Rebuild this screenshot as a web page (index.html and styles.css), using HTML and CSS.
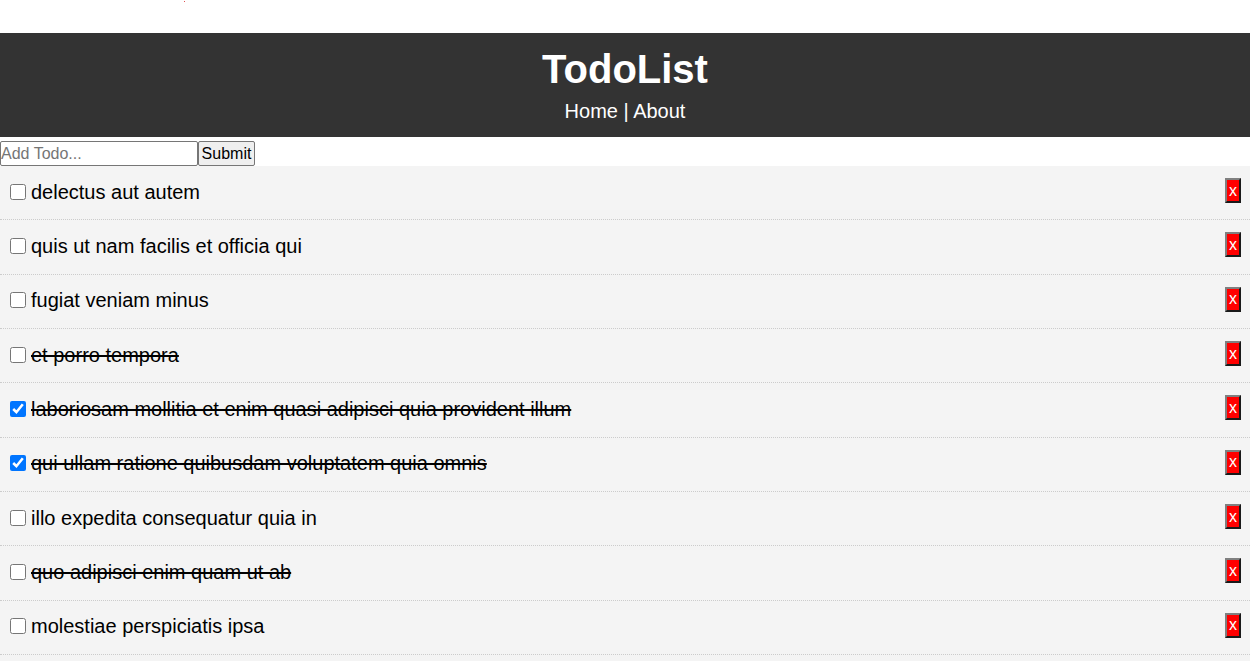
FILE: index.html
```html
<!DOCTYPE html>
<html>
<head>
<meta charset="utf-8">
<link rel="stylesheet" href="styles.css">
</head>
<body>
<div class="app">
  <div class="top-strip"><span class="dot"></span></div>
  <header class="header">
    <h1 class="title">TodoList</h1>
    <nav class="nav"><a href="#">Home</a> | <a href="#">About</a></nav>
  </header>
  <form class="add-form">
    <input class="add-input" type="text" placeholder="Add Todo...">
    <button class="add-btn" type="button">Submit</button>
  </form>
  <div class="todos">
    <div class="todo"><input class="check" type="checkbox"><span class="label">delectus aut autem</span><button class="del" type="button">x</button></div>
    <div class="todo"><input class="check" type="checkbox"><span class="label">quis ut nam facilis et officia qui</span><button class="del" type="button">x</button></div>
    <div class="todo"><input class="check" type="checkbox"><span class="label">fugiat veniam minus</span><button class="del" type="button">x</button></div>
    <div class="todo"><input class="check" type="checkbox"><span class="label done">et porro tempora</span><button class="del" type="button">x</button></div>
    <div class="todo"><input class="check" type="checkbox" checked><span class="label done">laboriosam mollitia et enim quasi adipisci quia provident illum</span><button class="del" type="button">x</button></div>
    <div class="todo"><input class="check" type="checkbox" checked><span class="label done">qui ullam ratione quibusdam voluptatem quia omnis</span><button class="del" type="button">x</button></div>
    <div class="todo"><input class="check" type="checkbox"><span class="label">illo expedita consequatur quia in</span><button class="del" type="button">x</button></div>
    <div class="todo"><input class="check" type="checkbox"><span class="label done">quo adipisci enim quam ut ab</span><button class="del" type="button">x</button></div>
    <div class="todo"><input class="check" type="checkbox"><span class="label">molestiae perspiciatis ipsa</span><button class="del" type="button">x</button></div>
  </div>
</div>
</body>
</html>
```
FILE: styles.css
```css
* { box-sizing: border-box; }
html, body { margin: 0; padding: 0; background: #fff; }
body {
  font-family: "Liberation Sans", Arial, sans-serif;
  font-size: 20px;
  line-height: 1.4;
  color: #000;
  overflow: hidden;
}
.top-strip { height: 33px; position: relative; }
.dot {
  position: absolute;
  left: 184px;
  top: 1px;
  width: 1px;
  height: 1px;
  background: #e05050;
}
.header {
  background: #333;
  color: #fff;
  text-align: center;
  padding: 8px 10px 12px;
  height: 104px;
}
.title {
  margin: 0;
  font-size: 40px;
  font-weight: bold;
  line-height: 56px;
}
.nav { line-height: 28px; }
.nav a { color: #fff; text-decoration: none; }
.add-form {
  display: flex;
  align-items: flex-start;
  height: 29px;
  padding-top: 4px;
}
.add-input {
  width: 198px;
  height: 25px;
  margin: 0;
  padding: 1px 0;
  font-family: "Liberation Sans", Arial, sans-serif;
  font-size: 16px;
  border: 1px solid #767676;
  border-radius: 2px;
}
.add-input::placeholder { color: #757575; }
.add-btn {
  height: 25px;
  margin: 0;
  padding: 0 1px;
  width: 57px;
  font-family: "Liberation Sans", Arial, sans-serif;
  font-size: 16px;
  color: #000;
  background: #efefef;
  border: 1px solid #767676;
  border-radius: 2px;
}
.todos {
  background: #f4f4f4;
  min-height: 495px;
}
.todo {
  display: flex;
  align-items: center;
  background: #f4f4f4;
  height: 54.33px;
  padding: 0 9px 2px 10px;
  border-bottom: 1px dotted #ccc;
}
.check {
  width: 16px;
  height: 16px;
  margin: 0 5px 0 0;
  flex: none;
}
.label { flex: 1; white-space: nowrap; }
.label.done { text-decoration: line-through; }
.del {
  flex: none;
  width: 16px;
  height: 25px;
  padding: 0;
  margin: 0 0 2px 0;
  background: #ff0000;
  color: #fff;
  font-family: "Liberation Sans", Arial, sans-serif;
  font-size: 16px;
  line-height: 1;
  border: 2px solid;
  border-color: #808080 #1a1a1a #1a1a1a #808080;
}
```
